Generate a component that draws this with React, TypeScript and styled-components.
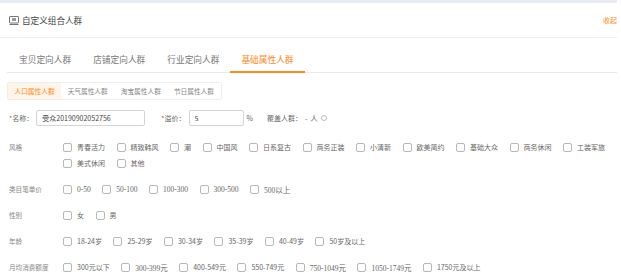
import React from "react";
import styled, { createGlobalStyle } from "styled-components";

const Global = createGlobalStyle`
  html, body { margin: 0; padding: 0; background: #fff; overflow: hidden; }
  body { font-family: "Noto Sans CJK SC", "Noto Sans", sans-serif; }
  * { box-sizing: border-box; }
`;

const ORANGE = "#ff8a1c";

const Page = styled.div`
  width: 617px;
  height: 278px;
  overflow: hidden;
  background: #fff;
`;

const TopBand = styled.div`
  height: 3px;
  background: #e9ecf3;
`;

const Header = styled.div`
  height: 35px;
  display: flex;
  align-items: center;
  justify-content: space-between;
  padding-left: 9px;
  border-bottom: 1px solid #eeeeee;
`;

const Title = styled.div`
  display: flex;
  align-items: center;
  gap: 3px;
  font-size: 8.6px;
  color: #444;
`;

const Collapse = styled.span`
  font-size: 7px;
  color: ${ORANGE};
  margin-right: 0;
`;

const TabBar = styled.div`
  display: flex;
  margin: 0 0 0 7px;
  padding: 9px 0 0 1px;
  border-bottom: 1px solid #eaeaea;
`;

const Tab = styled.div<{ $active?: boolean }>`
  height: 26px;
  line-height: 25px;
  padding: 0 11px;
  font-size: 8.7px;
  color: ${(p) => (p.$active ? ORANGE : "#777")};
  border-bottom: 2px solid ${(p) => (p.$active ? ORANGE : "transparent")};
  margin-bottom: -1px;
`;

const Body = styled.div`
  padding: 9px 0 0 7px;
`;

const SubTabs = styled.div`
  display: flex;
  width: fit-content;
  height: 18px;
  border: 1px solid #eeeeee;
  border-radius: 2px;
  overflow: hidden;
`;

const SubTab = styled.div<{ $active?: boolean }>`
  padding: 0 6.5px;
  line-height: 16px;
  font-size: 6.7px;
  color: ${(p) => (p.$active ? ORANGE : "#888")};
  background: ${(p) => (p.$active ? "#fff4e8" : "#fff")};
`;

const FormRow = styled.div`
  display: flex;
  align-items: center;
  height: 16px;
  margin: 10px 0 0 2px;
  font-size: 7px;
  color: #666;
`;

const Req = styled.span<{ $ml?: number }>`
  color: #f2453d;
  margin-left: ${(p) => p.$ml ?? 0}px;
`;

const FieldLabel = styled.span`
  margin-right: 3px;
`;

const Input = styled.div<{ $w: number }>`
  width: ${(p) => p.$w}px;
  height: 16px;
  border: 1px solid #d4d4d4;
  border-radius: 2px;
  padding-left: 5px;
  line-height: 14px;
  font-size: 7px;
  color: #444;
`;

const Unit = styled.span`
  margin-left: 3px;
`;

const Coverage = styled.span`
  margin-left: 14px;
  display: flex;
  align-items: center;
  gap: 3px;
`;

const Info = styled.span`
  display: inline-block;
  width: 6px;
  height: 6px;
  border: 1px solid #bbb;
  border-radius: 50%;
  margin-left: 1px;
`;

const Filters = styled.div`
  display: flex;
  flex-direction: column;
  gap: 10px;
  margin: 13px 0 0 2px;
`;

const FilterRow = styled.div`
  display: flex;
  align-items: flex-start;
`;

const RowLabel = styled.div`
  width: 54px;
  flex: none;
  font-size: 6.6px;
  line-height: 16px;
  color: #888;
`;

const Options = styled.div`
  display: flex;
  flex-wrap: wrap;
  column-gap: 11.5px;
  flex: 1;
`;

const Option = styled.label<{ $serif?: boolean }>`
  display: flex;
  align-items: center;
  height: 16px;
  gap: 5px;
  font-size: ${(p) => (p.$serif ? "7.5px" : "7px")};
  color: #666;
  font-family: ${(p) =>
    p.$serif
      ? `"Liberation Serif", "Noto Sans CJK SC", serif`
      : `"Noto Sans CJK SC", "Noto Sans", sans-serif`};
`;

const Box = styled.span`
  width: 9px;
  height: 9px;
  border: 1px solid #b8b8b8;
  border-radius: 2px;
  background: #fff;
  flex: none;
`;

type Opt = { t: string; serif?: boolean };
const o = (t: string, serif?: boolean): Opt => ({ t, serif });

const rows: { label: string; opts: Opt[] }[] = [
  {
    label: "风格",
    opts: [
      "青春活力",
      "精致韩风",
      "潮",
      "中国风",
      "日系复古",
      "商务正装",
      "小清新",
      "欧美简约",
      "基础大众",
      "商务休闲",
      "工装军旅",
      "美式休闲",
      "其他",
    ].map((t) => o(t)),
  },
  {
    label: "类目笔单价",
    opts: [o("0-50", true), o("50-100", true), o("100-300", true), o("300-500", true), o("500以上", true)],
  },
  { label: "性别", opts: [o("女"), o("男")] },
  {
    label: "年龄",
    opts: ["18-24岁", "25-29岁", "30-34岁", "35-39岁", "40-49岁", "50岁及以上"].map((t) => o(t)),
  },
  {
    label: "月均消费额度",
    opts: [
      o("300元以下"),
      o("300-399元", true),
      o("400-549元"),
      o("550-749元"),
      o("750-1049元", true),
      o("1050-1749元", true),
      o("1750元及以上"),
    ],
  },
];

const CardIcon = () => (
  <svg width="10" height="9" viewBox="0 0 10 9" fill="none" stroke="#777" strokeWidth="1">
    <rect x="0.5" y="0.5" width="9" height="6.5" rx="0.5" />
    <rect x="3" y="2" width="4" height="3" fill="#999" stroke="none" />
    <line x1="0.5" y1="8.5" x2="9.5" y2="8.5" />
  </svg>
);

export default function App() {
  return (
    <Page>
      <Global />
      <TopBand />
      <Header>
        <Title>
          <CardIcon />
          自定义组合人群
        </Title>
        <Collapse>收起</Collapse>
      </Header>
      <TabBar>
        <Tab>宝贝定向人群</Tab>
        <Tab>店铺定向人群</Tab>
        <Tab>行业定向人群</Tab>
        <Tab $active>基础属性人群</Tab>
      </TabBar>
      <Body>
        <SubTabs>
          <SubTab $active>人口属性人群</SubTab>
          <SubTab>天气属性人群</SubTab>
          <SubTab>淘宝属性人群</SubTab>
          <SubTab>节日属性人群</SubTab>
        </SubTabs>
        <FormRow>
          <Req>*</Req>
          <FieldLabel>名称：</FieldLabel>
          <Input $w={109}>受众20190902052756</Input>
          <Req $ml={16}>*</Req>
          <FieldLabel>溢价：</FieldLabel>
          <Input $w={55}>5</Input>
          <Unit>%</Unit>
          <Coverage>
            覆盖人群：<span>-</span>人<Info />
          </Coverage>
        </FormRow>
        <Filters>
          {rows.map((r) => (
            <FilterRow key={r.label}>
              <RowLabel>{r.label}</RowLabel>
              <Options>
                {r.opts.map((op) => (
                  <Option key={op.t} $serif={op.serif}>
                    <Box />
                    {op.t}
                  </Option>
                ))}
              </Options>
            </FilterRow>
          ))}
        </Filters>
      </Body>
    </Page>
  );
}
